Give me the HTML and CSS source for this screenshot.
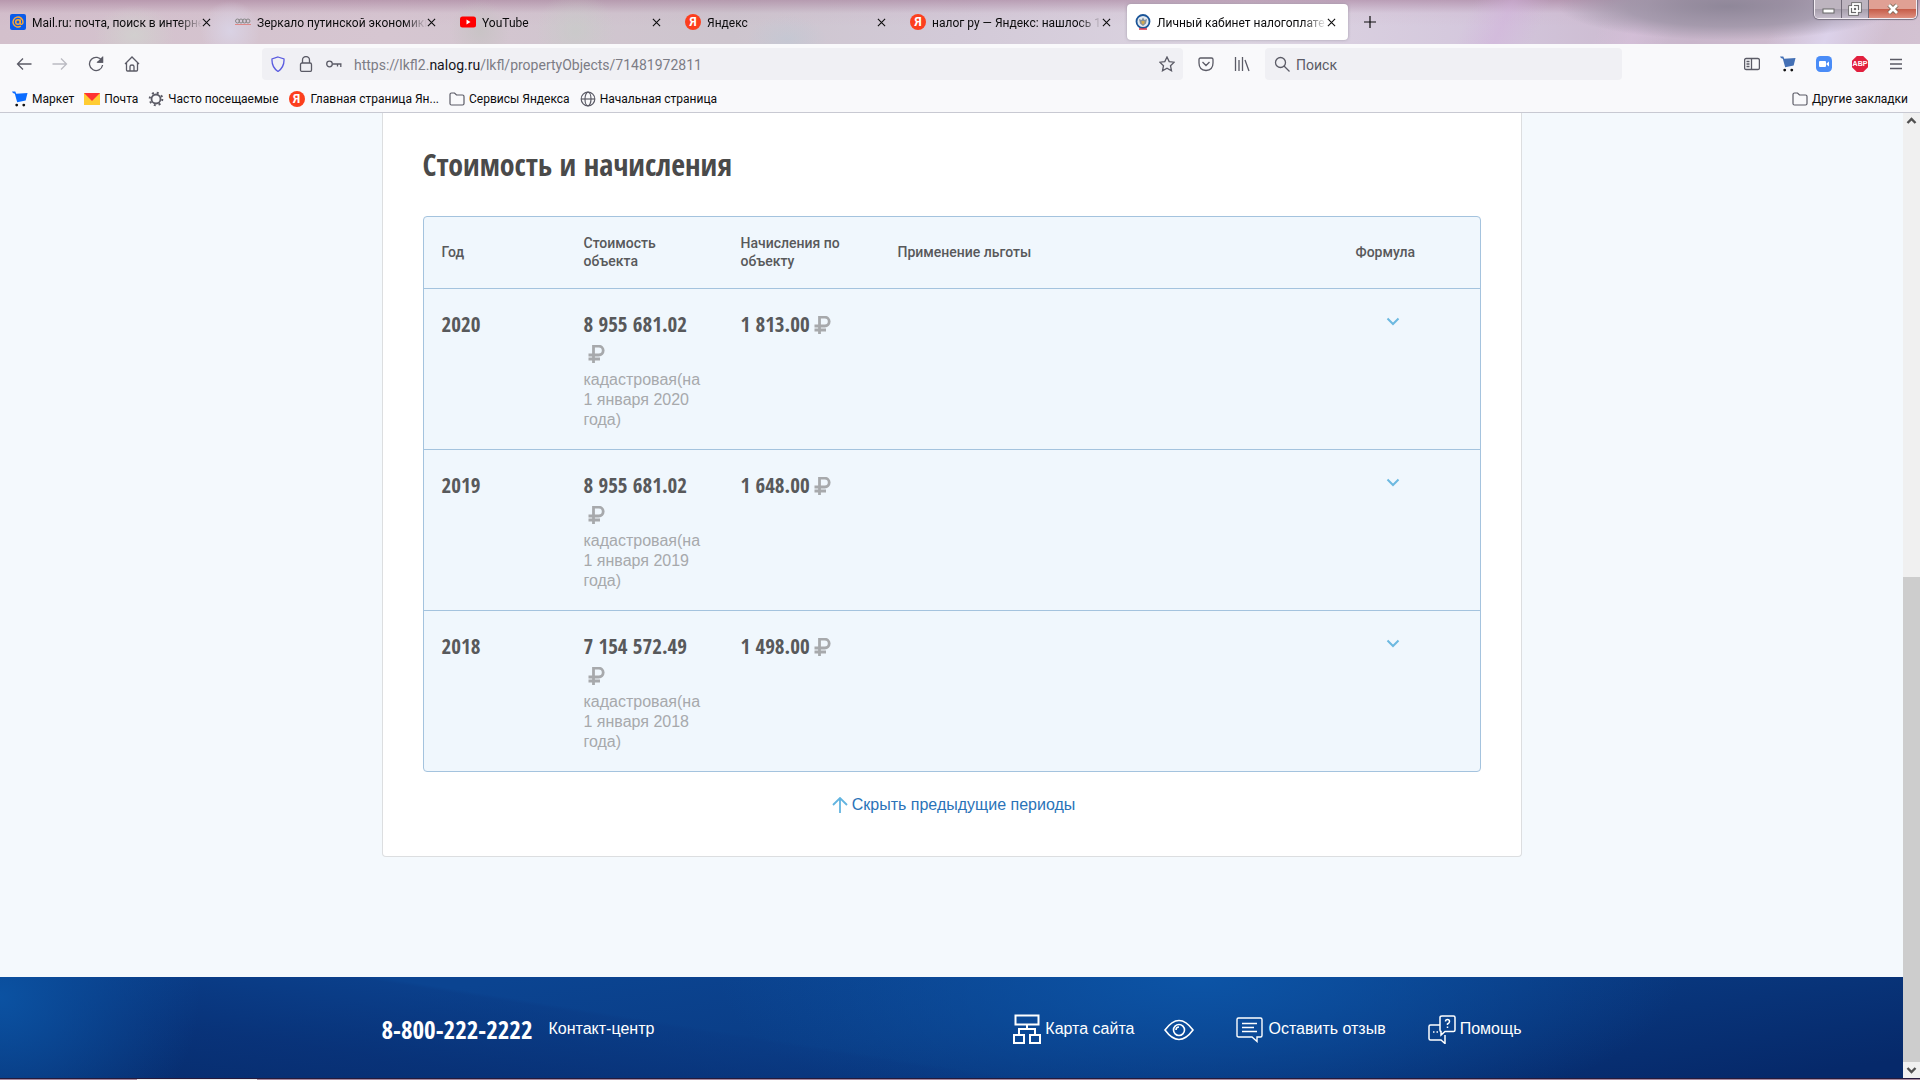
FILE: index.html
```html
<!DOCTYPE html>
<html lang="ru">
<head>
<meta charset="utf-8">
<title>Личный кабинет налогоплательщика</title>
<link rel="stylesheet" href="styles.css">
</head>
<body>
<svg class="defs" aria-hidden="true">
  <symbol id="close" viewBox="0 0 10 10"><path d="M1 1l8 8M9 1L1 9" fill="none" stroke="currentColor" stroke-width="1.2"/></symbol>
  <symbol id="folder" viewBox="0 0 16 16"><path d="M1 12.500V3.500Q1 2 2.500 2H5.500L7.500 4H13.500Q15 4 15 5.500V12.500Q15 14 13.500 14H2.500Q1 14 1 12.500Z" fill="none" stroke="currentColor" stroke-width="1.200"/></symbol>
  <symbol id="cart" viewBox="0 0 17 17"><path d="M0 0.500H3.500L4.500 3L16.500 2L14.500 10L5.500 12L3 3L1 2Z"/><circle cx="5" cy="15" r="1.500" fill="#111"/><circle cx="12.500" cy="15" r="1.500" fill="#111"/></symbol>
  <symbol id="ruble" viewBox="0 0 17 18"><path d="M5.500 18V1.200H10.800a4.100 4.100 0 0 1 0 8.800H0.500M0.500 14H12" fill="none" stroke="currentColor" stroke-width="2.800"/></symbol>
  <symbol id="down" viewBox="0 0 14 9"><path d="M1.500 1.500L7 7L12.500 1.500" fill="none" stroke="currentColor" stroke-width="2"/></symbol>
</svg>

<header class="browser">
  <div class="titlebar">
    <nav class="tabs" aria-label="Вкладки">
      <div class="tab">
        <svg class="favicon" viewBox="0 0 16 16"><rect width="16" height="16" rx="2" fill="#0a5bea"/><circle cx="8" cy="8" r="2.300" fill="none" stroke="#ffa930" stroke-width="1.500"/><path d="M10.300 5.500V9q0 1.500 1.300 1.400Q13 10.200 13 8A5 5 0 1 0 10.800 12.200" fill="none" stroke="#ffa930" stroke-width="1.400"/></svg>
        <a class="tab-title" href="#">Mail.ru: почта, поиск в интерне</a>
        <button class="tab-close" aria-label="Закрыть"><svg><use href="#close"/></svg></button>
      </div>
      <div class="tab">
        <svg class="favicon" viewBox="0 0 16 16"><g fill="none" stroke="#888"><circle cx="2.500" cy="7" r="2"/><circle cx="6" cy="7" r="2"/><circle cx="9.500" cy="7" r="2"/><circle cx="13" cy="7" r="2"/></g><path d="M0 10.500H16" stroke="#d88" /></svg>
        <a class="tab-title" href="#">Зеркало путинской экономики</a>
        <button class="tab-close" aria-label="Закрыть"><svg><use href="#close"/></svg></button>
      </div>
      <div class="tab">
        <svg class="favicon" viewBox="0 0 16 16"><rect y="2.500" width="16" height="11" rx="2.500" fill="#f00"/><path d="M6.500 5.500V10.500L10.500 8Z" fill="#fff"/></svg>
        <a class="tab-title" href="#">YouTube</a>
        <button class="tab-close" aria-label="Закрыть"><svg><use href="#close"/></svg></button>
      </div>
      <div class="tab">
        <span class="favicon yandex">Я</span>
        <a class="tab-title" href="#">Яндекс</a>
        <button class="tab-close" aria-label="Закрыть"><svg><use href="#close"/></svg></button>
      </div>
      <div class="tab">
        <span class="favicon yandex">Я</span>
        <a class="tab-title" href="#">налог ру — Яндекс: нашлось 1</a>
        <button class="tab-close" aria-label="Закрыть"><svg><use href="#close"/></svg></button>
      </div>
      <div class="tab tab-active">
        <svg class="favicon" viewBox="0 0 16 16"><circle cx="8" cy="7.500" r="6.500" fill="#e4eaf0" stroke="#1b5598" stroke-width="1.800"/><path d="M4 5l2.500 1L8 3.500L9.500 6L12 5L11 9.500L8 12L5 9.500Z" fill="#85919a"/><path d="M6.500 7h3v2L8 10.500L6.500 9Z" fill="#d5a94c"/><path d="M4 15H12" stroke="#d8344a" stroke-width="1.500"/></svg>
        <a class="tab-title" href="#">Личный кабинет налогоплате</a>
        <button class="tab-close" aria-label="Закрыть"><svg><use href="#close"/></svg></button>
      </div>
      <button class="new-tab" aria-label="Новая вкладка"><svg viewBox="0 0 12 12"><path d="M6 0V12M0 6H12" stroke="currentColor" stroke-width="1.200"/></svg></button>
    </nav>
    <div class="window-controls">
      <button aria-label="Свернуть"><svg viewBox="0 0 20 16"><rect x="5" y="8" width="11" height="4" fill="#fff" stroke="#666"/></svg></button>
      <button aria-label="Восстановить"><svg viewBox="0 0 20 16"><g fill="none" stroke="#666" stroke-width="3.500"><rect x="8" y="3" width="7" height="7"/><rect x="5" y="6" width="7" height="7"/></g><g fill="none" stroke="#fff" stroke-width="1.800"><rect x="8" y="3" width="7" height="7"/><rect x="5" y="6" width="7" height="7"/></g></svg></button>
      <button class="window-close" aria-label="Закрыть окно"><svg viewBox="0 0 20 16"><path d="M6 4l8 8M14 4l-8 8" stroke="#765" stroke-width="4.500"/><path d="M6 4l8 8M14 4l-8 8" stroke="#fff" stroke-width="2.800"/></svg></button>
    </div>
  </div>

  <div class="navbar">
    <div class="nav-buttons">
      <button aria-label="Назад"><svg viewBox="0 0 16 16"><path d="M15.500 8H1.500M7 2.500L1.500 8L7 13.500"/></svg></button>
      <button aria-label="Вперёд" class="muted"><svg viewBox="0 0 16 16"><path d="M0.500 8H14.500M9 2.500L14.500 8L9 13.500"/></svg></button>
      <button aria-label="Обновить"><svg viewBox="0 0 16 16"><path d="M14 5A6.600 6.600 0 1 0 14.600 9M14.500 1V6H9.500"/><path d="M14.500 1.500V6H10Z" fill="currentColor"/></svg></button>
      <button aria-label="Домой"><svg viewBox="0 0 16 16"><path d="M1 8L8 1L15 8M2.500 7V14Q2.500 15 3.500 15H12.500Q13.500 15 13.500 14V7M6 15V10.500Q6 9 8 9Q10 9 10 10.500V15"/></svg></button>
    </div>
    <div class="urlbar">
      <svg class="shield" viewBox="0 0 16 16"><path d="M8 1L14 3Q14.500 11 8 15.500Q1.500 11 2 3Z"/></svg>
      <svg viewBox="0 0 16 16"><rect x="2.500" y="7" width="11" height="8.400" rx="1.500"/><path d="M4.500 7V4a3.500 3.500 0 0 1 7 0V7"/></svg>
      <svg viewBox="0 0 16 16"><circle cx="3.500" cy="8" r="2.800"/><path d="M6.300 8H15.500M11.500 8V10.500M14.800 8V11"/></svg>
      <div class="url" role="textbox" contenteditable="true" aria-label="Адрес">https://lkfl2.<strong>nalog.ru</strong>/lkfl/propertyObjects/71481972811</div>
      <button aria-label="В закладки"><svg viewBox="0 0 16 16"><path d="M8 1L10.200 5.600L15.200 6.200L11.500 9.700L12.500 14.800L8 12.300L3.500 14.800L4.500 9.700L0.800 6.200L5.800 5.600Z"/></svg></button>
    </div>
    <div class="nav-mid">
      <button aria-label="Pocket"><svg viewBox="0 0 16 16"><path d="M2.500 2H13.500Q15 2 15 3.500V7Q15 14 8 14.500Q1 14 1 7V3.500Q1 2 2.500 2ZM4.500 6L8 9.500L11.500 6"/></svg></button>
      <button aria-label="Библиотека"><svg viewBox="0 0 16 16"><path d="M1.500 1V15M5 4V15M8.500 1V15M11 4L15 15"/></svg></button>
    </div>
    <label class="searchbar">
      <svg viewBox="0 0 16 16"><circle cx="6.500" cy="6.500" r="5"/><path d="M10 10L15.500 15.500"/></svg>
      <input type="text" placeholder="Поиск" aria-label="Поиск">
    </label>
    <div class="nav-right">
      <button aria-label="Боковая панель"><svg viewBox="0 0 16 16"><rect x="0.600" y="2.500" width="14.800" height="11" rx="1.500"/><path d="M7.500 2.500V13.500M2.500 5.500H5.500M2.500 8H5.500M2.500 10.500H5.500"/></svg></button>
      <button aria-label="Маркет"><svg class="cart-ext"><use href="#cart"/></svg></button>
      <button aria-label="Zoom"><svg class="plain" viewBox="0 0 16 16"><rect width="16" height="16" rx="4.500" fill="#4a8cf7"/><rect x="3" y="5" width="7" height="6" rx="1" fill="#fff"/><path d="M10.500 7.500L13 5.500V10.500L10.500 8.500Z" fill="#fff"/></svg></button>
      <button aria-label="Adblock Plus"><span class="abp">ABP</span></button>
      <button aria-label="Меню"><svg viewBox="0 0 16 16"><path d="M2 3.500H14M2 8H14M2 12.500H14"/></svg></button>
    </div>
  </div>

  <nav class="bookmarks" aria-label="Закладки">
    <a href="#"><svg class="cart"><use href="#cart"/></svg>Маркет</a>
    <a href="#"><svg viewBox="0 0 16 16"><path d="M0 2H16V14H0Z" fill="#fc3"/><path d="M0 2H16L8 10Z" fill="#f33"/></svg>Почта</a>
    <a href="#"><svg viewBox="0 0 16 16"><circle cx="8" cy="8" r="4.500" fill="none" stroke="#5b5b66" stroke-width="1.800"/><circle cx="8" cy="8" r="6.300" fill="none" stroke="#5b5b66" stroke-width="2" stroke-dasharray="2 2.950"/></svg>Часто посещаемые</a>
    <a href="#"><span class="favicon yandex">Я</span><span class="wide">Главная страница Ян...</span></a>
    <a href="#"><svg class="icon-gray"><use href="#folder"/></svg>Сервисы Яндекса</a>
    <a href="#"><svg viewBox="0 0 16 16" fill="none" stroke="#5b5b66" stroke-width="1.200"><circle cx="8" cy="8" r="6.800"/><ellipse cx="8" cy="8" rx="3" ry="6.800"/><path d="M1 8H15"/></svg>Начальная страница</a>
    <a href="#" class="other"><svg class="icon-gray"><use href="#folder"/></svg>Другие закладки</a>
  </nav>
</header>

<div class="viewport">
  <div class="page">
    <main class="content">
      <section class="card">
        <h1>Стоимость и начисления</h1>
        <table class="charges">
          <colgroup><col class="col-year"><col class="col-money"><col class="col-money"><col><col class="col-formula"></colgroup>
          <thead>
            <tr><th>Год</th><th>Стоимость объекта</th><th>Начисления по объекту</th><th>Применение льготы</th><th>Формула</th></tr>
          </thead>
          <tbody>
            <tr>
              <td><b>2020</b></td>
              <td><b>8 955 681.02</b> <svg class="ruble"><use href="#ruble"/></svg><small>кадастровая(на 1 января 2020 года)</small></td>
              <td><b>1 813.00</b><svg class="ruble"><use href="#ruble"/></svg></td>
              <td></td>
              <td><button class="expand" aria-label="Показать формулу"><svg><use href="#down"/></svg></button></td>
            </tr>
            <tr>
              <td><b>2019</b></td>
              <td><b>8 955 681.02</b> <svg class="ruble"><use href="#ruble"/></svg><small>кадастровая(на 1 января 2019 года)</small></td>
              <td><b>1 648.00</b><svg class="ruble"><use href="#ruble"/></svg></td>
              <td></td>
              <td><button class="expand" aria-label="Показать формулу"><svg><use href="#down"/></svg></button></td>
            </tr>
            <tr>
              <td><b>2018</b></td>
              <td><b>7 154 572.49</b> <svg class="ruble"><use href="#ruble"/></svg><small>кадастровая(на 1 января 2018 года)</small></td>
              <td><b>1 498.00</b><svg class="ruble"><use href="#ruble"/></svg></td>
              <td></td>
              <td><button class="expand" aria-label="Показать формулу"><svg><use href="#down"/></svg></button></td>
            </tr>
          </tbody>
        </table>
        <a class="hide-link" href="#"><svg viewBox="0 0 16 16"><path d="M8 16V1M1 8L8 1L15 8" fill="none" stroke="#62b4e0" stroke-width="1.800"/></svg>Скрыть предыдущие периоды</a>
      </section>
    </main>
    <footer class="footer">
      <div class="footer-inner">
        <a class="phone" href="tel:88002222222">8-800-222-2222</a>
        <span class="center-label">Контакт-центр</span>
        <nav class="footer-links" aria-label="Ссылки">
          <a href="#"><svg viewBox="0 0 28 30" stroke-width="2"><path d="M2.500 1.500H25.500V10.500H2.500ZM14 10.500V15M6 21V15H22V21M1 21H11V29H1ZM17 21H27V29H17Z"/></svg>Карта сайта</a>
          <a href="#" class="vision" aria-label="Версия для слабовидящих"><svg viewBox="0 0 30 30" stroke-width="1.600"><path d="M1 16Q15 -3 29 16Q15 35 1 16Z"/><circle cx="15" cy="16" r="5.500"/><path d="M12 16a3 3 0 0 1 3-3"/></svg></a>
          <a href="#"><svg viewBox="0 0 28 30" stroke-width="1.400"><path d="M2.500 4H24.500Q26 4 26 5.500V21.500Q26 23 24.500 23H21V27.500L16 23H2.500Q1 23 1 21.500V5.500Q1 4 2.500 4ZM6 9.500H21M6 13.500H18M6 17.500H21"/></svg>Оставить отзыв</a>
          <a href="#"><svg viewBox="0 0 28 30" stroke-width="1.500"><path d="M14 2H25.500Q27 2 27 3.500V16Q27 17.500 25.500 17.500H17L13 21V17.500Q12 17.500 12 16V3.500Q12 2 14 2ZM12 11H2.500Q1 11 1 12.500V24.500Q1 26 2.500 26H13L17 29.500V21M17.500 7.500Q17.500 5.500 19.500 5.500Q21.500 5.500 21.500 7.500Q21.500 9 19.500 10V11M19.500 12.500V14M5 18H6.500M8.500 18H10"/></svg>Помощь</a>
        </nav>
      </div>
    </footer>
  </div>
  <div class="scrollbar" aria-hidden="true">
    <svg viewBox="0 0 17 16"><path d="M4.500 10L8.500 6L12.500 10"/></svg>
    <div class="track"><div class="thumb"></div></div>
    <svg viewBox="0 0 17 16"><path d="M4.500 6L8.500 10L12.500 6"/></svg>
  </div>
</div>
<div class="taskbar-edge"></div>
</body>
</html>
```
FILE: styles.css
```css
* { box-sizing: border-box; }
body {
  margin: 0;
  min-height: 100vh;
  display: flex;
  flex-direction: column;
  background: #f4f9fd;
  font: 16px/20px "Liberation Sans", Arial, sans-serif;
  color: #58595b;
}
.defs { display: none; }
button { border: 0; padding: 0; background: none; color: inherit; font: inherit; display: flex; align-items: center; justify-content: center; }
a { text-decoration: none; color: inherit; }
svg { display: block; flex: none; }

/* Browser chrome */
.browser { font: 12px/16px Roboto, "Noto Sans", sans-serif; color: #0c0c0d; background: #f9f9fb; border-bottom: 1px solid #c8c9d2; }
.titlebar {
  display: flex;
  justify-content: space-between;
  align-items: flex-start;
  height: 44px;
  padding: 0 3px 0 2px;
  background:
    radial-gradient(ellipse 170px 34px at 90% 14%, #8f8799 0, #9c93a5cc 60%, transparent 100%),
    radial-gradient(ellipse 40px 30px at 7% 80%, #d0d8cf99, transparent),
    radial-gradient(ellipse 30px 30px at 12% 70%, #d9d2e4, transparent),
    radial-gradient(ellipse 30px 30px at 25% 70%, #c3c2c0aa, transparent),
    radial-gradient(ellipse 40px 40px at 30% 70%, #c6cdc799, transparent),
    radial-gradient(ellipse 40px 24px at 41% 90%, #bfc8d499, transparent),
    linear-gradient(115deg, transparent 76%, #d2afdc77 78%, transparent 80%, transparent 83%, #ddc3e066 85%, transparent 87%, transparent 92%, #dcd2ea 95%, transparent 98%),
    linear-gradient(#a0759388 0, #c8a8be22 30%, transparent 60%),
    linear-gradient(90deg, #d3c0cc, #d6c6d1 20%, #cdc5ce 38%, #d3cad8 50%, #ddd5e2 65%, #d3c6dc 78%, #c9b6cb 88%, #d3c2d2);
}
.tabs { display: flex; align-items: center; gap: 4px; padding-top: 4px; }
.tab { display: flex; align-items: center; width: 221px; height: 36px; padding: 0 12px 0 8px; border-radius: 4px; }
.tab-active { background: #fff; box-shadow: 0 0 3px #77708088; }
.favicon { width: 16px; height: 16px; }
.yandex { flex: none; border-radius: 50%; background: #fc3f1d; color: #fff; font-size: 12px; font-weight: 700; line-height: 16px; text-align: center; }
.tab-title { flex: 1; min-width: 0; margin-left: 6px; padding-top: 1px; overflow: hidden; white-space: nowrap; mask-image: linear-gradient(90deg, #000 calc(100% - 24px), transparent); }
.tab-close svg { width: 9px; height: 9px; }
.new-tab { width: 36px; height: 36px; }
.new-tab svg { width: 12px; height: 12px; }
.window-controls { display: flex; border: 1px solid #f4eef4; border-top: 0; border-radius: 0 0 5px 5px; box-shadow: 0 0 1px 1px #777080; overflow: hidden; }
.window-controls button { width: 27px; height: 18px; background: linear-gradient(#bdb4bf 50%, #a59daa 50%, #c5bccb); border-right: 1px solid #716a78; }
.window-controls .window-close { width: 47px; background: linear-gradient(#e0a094 50%, #c55b48 50%, #df9080); border: 0; }
.window-controls svg { width: 20px; height: 16px; }

.navbar { display: flex; align-items: center; padding: 4px 6px 0; }
.navbar svg { width: 16px; height: 16px; fill: none; stroke: currentColor; stroke-width: 1.3; color: #5b5b66; }
.navbar button { width: 36px; height: 32px; }
.navbar .muted svg { color: #bbbbc2; }
.navbar .plain, .navbar .cart-ext { stroke: none; }
.navbar .cart-ext { fill: #4470b5; }
.nav-buttons, .nav-mid, .nav-right { display: flex; }
.urlbar { flex: 1; display: flex; align-items: center; gap: 12px; height: 32px; margin-left: 112px; padding-left: 8px; border-radius: 4px; background: #f0f0f4; }
.urlbar .shield { color: #5a5be0; }
.urlbar button { width: 32px; margin-left: auto; }
.url { padding-top: 2px; color: #7c7c85; font-size: 14px; line-height: 20px; outline: 0; white-space: nowrap; }
.url strong { font-weight: 400; color: #15141a; }
.nav-mid { padding: 0 5px; }
.searchbar { display: flex; align-items: center; gap: 6px; width: 357px; height: 32px; padding: 0 9px; border-radius: 4px; background: #f0f0f4; }
.searchbar input { flex: 1; min-width: 0; padding: 2px 0 0; border: 0; outline: 0; background: none; font: 14px/20px Roboto, sans-serif; }
.searchbar input::placeholder { color: #5b5b66; opacity: 1; }
.nav-right { margin-left: 112px; }
.abp { width: 16px; height: 16px; background: #e2203e; color: #fff; font: 700 7px/16px "Liberation Sans", sans-serif; text-align: center; clip-path: polygon(30% 0, 70% 0, 100% 30%, 100% 70%, 70% 100%, 30% 100%, 0 70%, 0 30%); }

.bookmarks { display: flex; align-items: center; gap: 10px; height: 32px; padding: 5px 12px 0; }
.bookmarks a { display: flex; align-items: center; gap: 4px; white-space: nowrap; }
.bookmarks svg { width: 16px; height: 16px; }
.bookmarks .cart { fill: #0b6cff; }
.bookmarks .wide { padding-left: 2px; }
.bookmarks .other { margin-left: auto; }
.icon-gray { color: #5b5b66; }

/* Page */
.viewport { flex: 1; display: flex; }
.page { flex: 1; min-width: 0; display: flex; flex-direction: column; }
.content { flex: 1; padding: 0 16px; }
.card { max-width: 1140px; margin: 0 auto; padding: 32px 40px 41px; background: #fff; border: 1px solid #dcdee0; border-top: 0; border-radius: 0 0 4px 4px; }
h1 { margin: 0 0 31px; font: 700 30px/40px "Open Sans Condensed", "Roboto Condensed", sans-serif; color: #4a4a4a; }
.charges { width: 100%; table-layout: fixed; border: 1px solid #a4c3de; border-radius: 4px; border-spacing: 0; background: #f0f7fd; text-align: left; }
.col-year, .col-formula { width: 142px; }
.col-money { width: 157px; }
.charges th { height: 72px; padding: 0 18px 2px; border-bottom: 1px solid #a4c3de; font: 500 14px/18px Roboto, sans-serif; vertical-align: middle; }
.charges td { padding: 21px 18px 19px; border-bottom: 1px solid #a4c3de; line-height: 29px; vertical-align: top; }
.charges tr:last-child td { border-bottom: 0; }
.charges b { font: 700 21px/29px "Open Sans Condensed", "Roboto Condensed", sans-serif; white-space: nowrap; }
.charges small { display: block; font-size: 16px; line-height: 20px; color: #a7a9ac; }
.ruble { display: inline-block; width: 17px; height: 18px; margin-left: 4px; vertical-align: -2px; color: #a7a9ac; }
.expand { width: 74px; height: 22px; color: #6cb9e0; }
.expand svg { width: 14px; height: 9px; }
.hide-link { display: flex; width: fit-content; align-items: center; gap: 4px; margin: 23px auto 0; padding-left: 4px; color: #2a73b8; }
.hide-link svg { width: 16px; height: 16px; }

/* Footer */
.footer {
  padding: 0 16px;
  color: #fff;
  background:
    radial-gradient(ellipse 200px 170px at 0 20%, #0b52a2, transparent),
    linear-gradient(9deg, #072c6d 0, #082f74cc 20%, #0a3a8477 39%, transparent 40%),
    radial-gradient(ellipse 480px 160px at 63% 0, #0c54a6, transparent),
    linear-gradient(172deg, #0b4491 20%, #0a3d86 50%, #06296a 95%);
}
.footer-inner { display: flex; align-items: center; max-width: 1140px; height: 101px; margin: 0 auto; padding-top: 3px; }
.phone { font: 700 25px/32px "Open Sans Condensed", "Roboto Condensed", sans-serif; }
.center-label { margin-left: 16px; }
.footer-links { display: flex; gap: 42px; margin-left: auto; }
.footer-links a { display: flex; align-items: center; gap: 4px; }
.footer-links svg { width: 28px; height: 30px; fill: none; stroke: currentColor; }
.footer-links .vision { margin-left: -12px; }
.footer-links .vision svg { width: 30px; }

.scrollbar { display: flex; flex-direction: column; width: 17px; background: #f0f0f0; }
.scrollbar svg { width: 17px; height: 16px; fill: none; stroke: #505050; stroke-width: 2.4; }
.track { flex: 1; display: flex; flex-direction: column; justify-content: flex-end; }
.thumb { height: 52%; background: #cdcdcd; }
.taskbar-edge { height: 2px; border-top: 1px solid #241a3c; background: linear-gradient(90deg, #a78a9f 137px, #eee 137px, #eee 257px, #a78a9f 257px); }
```
